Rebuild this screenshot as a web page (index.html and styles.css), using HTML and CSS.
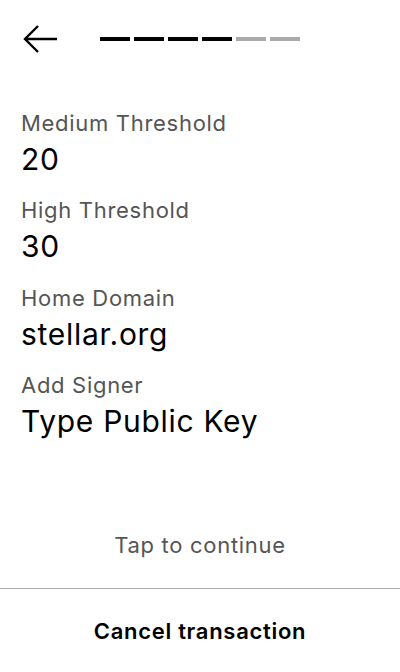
FILE: index.html
```html
<!DOCTYPE html>
<html>
<head>
<meta charset="utf-8">
<link rel="stylesheet" href="styles.css">
</head>
<body>
<div class="screen">
  <header class="top">
    <button class="back" aria-label="Back">
      <svg width="36" height="30" viewBox="0 0 36 30"><path d="M3 15H35M16 2L3 15L16 28" fill="none" stroke="#000" stroke-width="2.4"/></svg>
    </button>
    <div class="progress">
      <span class="seg on"></span><span class="seg on"></span><span class="seg on"></span><span class="seg on"></span><span class="seg"></span><span class="seg"></span>
    </div>
  </header>
  <main class="fields">
    <div class="field"><div class="label">Medium Threshold</div><div class="value">20</div></div>
    <div class="field"><div class="label">High Threshold</div><div class="value">30</div></div>
    <div class="field"><div class="label">Home Domain</div><div class="value">stellar.org</div></div>
    <div class="field"><div class="label">Add Signer</div><div class="value">Type Public Key</div></div>
  </main>
  <div class="tap">Tap to continue</div>
  <div class="cancel">Cancel transaction</div>
</div>
</body>
</html>
```
FILE: styles.css
```css
* { box-sizing: border-box; }
html, body { margin: 0; padding: 0; background: #fff; }
body { font-family: Inter, "Noto Sans", sans-serif; color: #000; }
.screen { width: 400px; height: 672px; display: flex; flex-direction: column; }
.top { display: flex; align-items: center; height: 78px; padding: 0 0 0 22px; }
.back { border: 0; background: none; padding: 0; width: 36px; height: 30px; display: flex; }
.progress { display: flex; gap: 4px; margin-left: 42px; }
.seg { width: 30px; height: 4px; background: #aaa; }
.seg.on { background: #000; }
.fields { padding: 32px 21px 0; display: flex; flex-direction: column; }
.field { height: 87.4px; }
.label { font-size: 22px; line-height: 26px; letter-spacing: 0.7px; color: #555; }
.value { font-size: 30px; line-height: 46px; letter-spacing: 0.7px; color: #000; }
.tap { margin-top: auto; text-align: center; font-size: 22px; letter-spacing: 0.7px; color: #555; line-height: 30px; padding-bottom: 28px; border-bottom: 1px solid #aaa; }
.cancel { height: 83px; display: flex; align-items: center; justify-content: center; font-size: 22px; letter-spacing: 0.7px; font-weight: 600; }
```
